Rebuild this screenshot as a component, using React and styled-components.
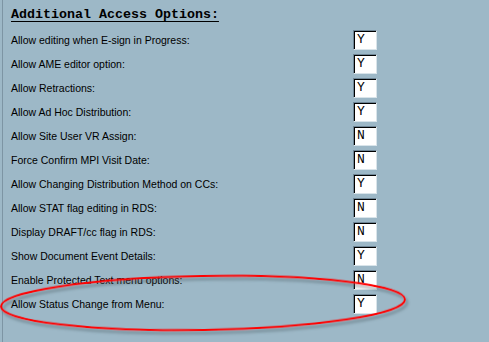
import { Fragment } from 'react';
import styled, { createGlobalStyle } from 'styled-components';

const GlobalStyle = createGlobalStyle`
    html, body {
        margin: 0;
        padding: 0;
        background: #9db8c7;
    }
`;

const options = [
    { label: 'Allow editing when E-sign in Progress:', value: 'Y' },
    { label: 'Allow AME editor option:', value: 'Y' },
    { label: 'Allow Retractions:', value: 'Y' },
    { label: 'Allow Ad Hoc Distribution:', value: 'Y' },
    { label: 'Allow Site User VR Assign:', value: 'N' },
    { label: 'Force Confirm MPI Visit Date:', value: 'N' },
    { label: 'Allow Changing Distribution Method on CCs:', value: 'Y' },
    { label: 'Allow STAT flag editing in RDS:', value: 'N' },
    { label: 'Display DRAFT/cc flag in RDS:', value: 'N' },
    { label: 'Show Document Event Details:', value: 'Y' },
    { label: 'Enable Protected Text menu options:', value: 'N' },
    { label: 'Allow Status Change from Menu:', value: 'Y' },
];

const Page = styled.div`
    position: relative;
    width: 489px;
    height: 342px;
    overflow: hidden;
    background: #9db8c7;
`;

const Panel = styled.div`
    margin-left: 2px;
    height: 100%;
    border-left: 1px solid #7d95a4;
    padding: 7px 0 0 8px;
    box-sizing: border-box;
`;

const Heading = styled.div`
    font-family: "Liberation Mono", "Courier New", monospace;
    font-weight: bold;
    font-size: 13.33px;
    line-height: 16px;
    color: #000;
    text-decoration: underline;
    text-underline-offset: 3px;
    margin-bottom: 5px;
`;

const OptionList = styled.div`
    display: grid;
    grid-template-columns: 342px 24px;
    grid-auto-rows: 24px;
    align-items: center;
`;

const Label = styled.span`
    font-family: "Liberation Sans", Arial, sans-serif;
    font-size: 10.5px;
    color: #000;
    white-space: nowrap;
`;

const FlagBox = styled.div`
    width: 24px;
    height: 20px;
    box-sizing: border-box;
    background: #fff;
    border-top: 1px solid #6f8696;
    border-left: 1px solid #6f8696;
    border-right: 1px solid #d9e4ea;
    border-bottom: 1px solid #d9e4ea;
    box-shadow: inset 1px 1px 0 #000;
    padding: 1px 0 0 3px;
    font-family: "Liberation Mono", "Courier New", monospace;
    font-size: 13px;
    line-height: 16px;
    color: #000;
`;

const Highlight = styled.svg`
    position: absolute;
    left: 0;
    top: 270px;
    overflow: visible;
`;

const App = () => {
    return (
        <Page>
            <GlobalStyle />
            <Panel>
                <Heading>Additional Access Options:</Heading>
                <OptionList>
                    {options.map((opt) => (
                        <Fragment key={opt.label}>
                            <Label>{opt.label}</Label>
                            <FlagBox>{opt.value}</FlagBox>
                        </Fragment>
                    ))}
                </OptionList>
            </Panel>
            <Highlight width="420" height="70" viewBox="0 0 420 70">
                <defs>
                    <filter id="shadow" x="-5%" y="-30%" width="110%" height="160%">
                        <feDropShadow dx="2" dy="3" stdDeviation="1.5" floodColor="#4a5a64" floodOpacity="0.6" />
                    </filter>
                </defs>
                <ellipse cx="203" cy="33" rx="202" ry="27" fill="none" stroke="#ff0000" strokeWidth="2" transform="rotate(-1 203 33)" filter="url(#shadow)" />
            </Highlight>
        </Page>
    );
}

export default App;
